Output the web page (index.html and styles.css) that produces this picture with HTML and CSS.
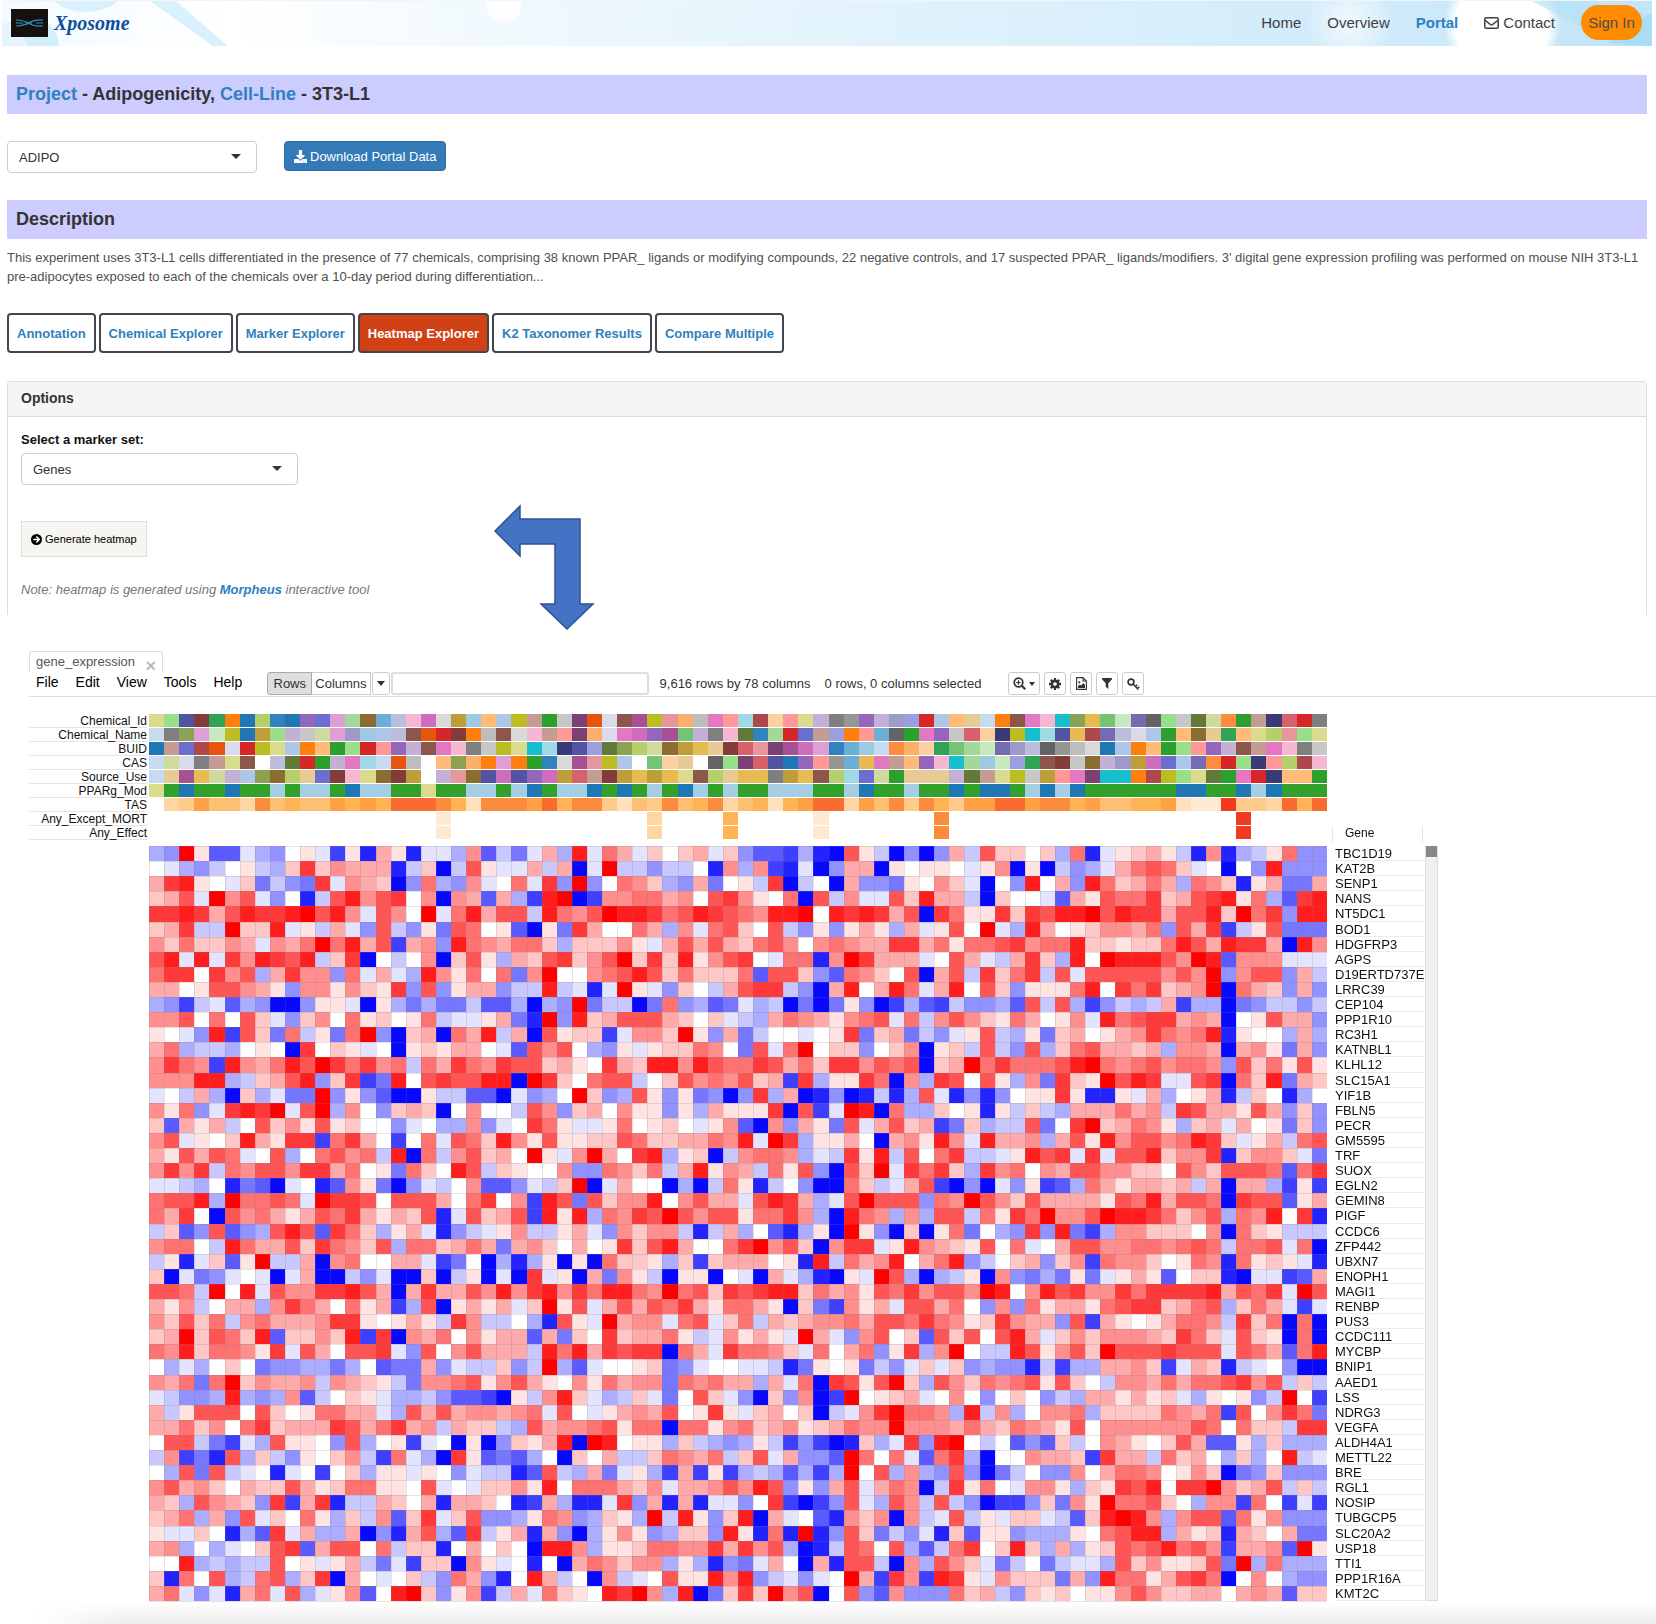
FILE: index.html
```html
<!DOCTYPE html>
<html lang="en">
<head>
<meta charset="utf-8">
<title>Xposome - Portal</title>
<link rel="stylesheet" href="styles.css">
</head>
<body>
<header class="site-header">
  <svg class="header-art" viewBox="0 0 1650 45" preserveAspectRatio="none" aria-hidden="true">
    <defs>
      <linearGradient id="sky" x1="0" x2="1" y1="0" y2="0">
        <stop offset="0" stop-color="#f4fbff"/><stop offset=".14" stop-color="#ffffff"/><stop offset=".3" stop-color="#f0f9fe"/>
        <stop offset=".55" stop-color="#e0f2fc"/><stop offset=".75" stop-color="#d5edfb"/><stop offset="1" stop-color="#c3e5f8"/>
      </linearGradient>
      <radialGradient id="glow"><stop offset=".8" stop-color="#fff"/><stop offset="1" stop-color="#fff" stop-opacity="0"/></radialGradient>
      <radialGradient id="soft"><stop offset=".2" stop-color="#fff" stop-opacity=".6"/><stop offset="1" stop-color="#fff" stop-opacity="0"/></radialGradient>
    </defs>
    <rect width="1650" height="45" fill="url(#sky)"/>
    <ellipse cx="84" cy="-14" rx="38" ry="25" fill="#d9f0fd"/>
    <path d="M148 0H174L226 45H211Z" fill="#d9f0fd"/>
    <circle cx="26" cy="46" r="31" fill="#d3eefc"/>
    <path d="M0 20Q20 28 26 45H0Z" fill="#e6f6fe"/>
    <circle cx="502" cy="4" r="20" fill="url(#glow)" opacity=".8"/>
    <circle cx="1348" cy="22" r="46" fill="url(#soft)"/>
    <circle cx="1500" cy="25" r="58" fill="url(#glow)"/>
    <path d="M1530 0H1585L1650 14V45H1615Z" fill="#b5e0f7" opacity=".65"/>
    <path d="M1605 42L1650 12V45Z" fill="#9fd8f5" opacity=".6"/>
  </svg>
  <a class="brand" href="#">
    <svg class="brand-mark" width="37" height="28" viewBox="0 0 37 28" aria-hidden="true">
      <rect width="37" height="28" fill="#15110f"/>
      <path d="M5 11Q12 11 18 14.500T32 17M5 17Q12 17 18 13.500T32 11M5 14H12M16 12.500V16M20 12.500V16M25 14H32" fill="none" stroke="#2b94c4" stroke-width="1.200"/>
    </svg>
    <span class="brand-name">Xposome</span>
  </a>
  <nav class="site-nav">
    <a href="#">Home</a>
    <a href="#">Overview</a>
    <a class="current" href="#">Portal</a>
    <a class="with-icon" href="#"><svg width="15" height="12" viewBox="0 0 15 12" aria-hidden="true"><rect x=".8" y=".8" width="13.400" height="10.400" rx="1.300" fill="none" stroke="currentColor" stroke-width="1.500"/><path d="M1 3.300L6.500 7.600Q7.500 8.300 8.500 7.600L14 3.300" fill="none" stroke="currentColor" stroke-width="1.400"/></svg>Contact</a>
    <button class="sign-in" type="button">Sign In</button>
  </nav>
</header>

<main>
  <div class="page">
    <h1 class="bar"><a href="#">Project</a> - Adipogenicity, <a href="#">Cell-Line</a> - 3T3-L1</h1>
    <div class="portal-row">
      <div class="picker picker-portal"><select aria-label="Portal"><option>ADIPO</option></select></div>
      <button class="download" type="button"><svg width="13" height="13" viewBox="0 0 512 512" aria-hidden="true"><path fill="currentColor" d="M216 0h80c13.300 0 24 10.700 24 24v168h87.700c17.800 0 26.700 21.500 14.100 34.100L269.700 378.300c-7.500 7.500-19.800 7.500-27.300 0L90.100 226.100c-12.600-12.600-3.700-34.100 14.100-34.100H192V24c0-13.300 10.700-24 24-24zm296 376v112c0 13.300-10.700 24-24 24H24c-13.300 0-24-10.700-24-24V376c0-13.300 10.700-24 24-24h146.700l49 49c20.100 20.100 52.500 20.100 72.600 0l49-49H488c13.300 0 24 10.700 24 24zm-124 88c0-11-9-20-20-20s-20 9-20 20 9 20 20 20 20-9 20-20zm64 0c0-11-9-20-20-20s-20 9-20 20 9 20 20 20 20-9 20-20z"/></svg>Download Portal Data</button>
    </div>
    <h2 class="bar">Description</h2>
    <p class="description">This experiment uses 3T3-L1 cells differentiated in the presence of 77 chemicals, comprising 38 known PPAR_ ligands or modifying compounds, 22 negative controls, and 17 suspected PPAR_ ligands/modifiers. 3' digital gene expression profiling was performed on mouse NIH 3T3-L1 pre-adipocytes exposed to each of the chemicals over a 10-day period during differentiation...</p>
    <nav class="tabs">
      <a href="#">Annotation</a>
      <a href="#">Chemical Explorer</a>
      <a href="#">Marker Explorer</a>
      <a class="active" href="#">Heatmap Explorer</a>
      <a href="#">K2 Taxonomer Results</a>
      <a href="#">Compare Multiple</a>
    </nav>
    <section class="panel">
      <h3 class="panel-title">Options</h3>
      <div class="panel-body">
        <label for="marker">Select a marker set:</label>
        <div class="picker picker-marker"><select id="marker"><option>Genes</option></select></div>
        <button class="generate" type="button"><svg width="11" height="11" viewBox="0 0 12 12" aria-hidden="true"><circle cx="6" cy="6" r="6"/><path d="M2.500 6H8.500M5.800 2.800L9 6L5.800 9.200" fill="none" stroke="#fff" stroke-width="1.700"/></svg>Generate heatmap</button>
        <p class="note">Note: heatmap is generated using <a href="#">Morpheus</a> interactive tool</p>
      </div>
      <svg class="arrow" width="102" height="128" viewBox="0 0 102 128" aria-hidden="true"><path d="M2 27L27 2V15H87V100H100L74 125L48 100H62V40H27V52Z" fill="#4472c4" stroke="#2f528f" stroke-width="1.500"/></svg>
    </section>
  </div>

  <section class="morpheus">
    <div class="file-tab"><span>gene_expression</span><button type="button" aria-label="Close">×</button></div>
    <div class="toolbar">
      <div class="menu"><button type="button">File</button><button type="button">Edit</button><button type="button">View</button><button type="button">Tools</button><button type="button">Help</button></div>
      <div class="search">
        <button class="seg pressed" type="button">Rows</button><button class="seg" type="button">Columns</button><button class="seg seg-caret" type="button" aria-label="More"><i class="caret"></i></button><input type="text" aria-label="Search">
      </div>
      <div class="status"><span>9,616 rows by 78 columns</span><span>0 rows, 0 columns selected</span></div>
      <div class="tools">
        <button class="tool wide" type="button" aria-label="Zoom"><svg width="13" height="13" viewBox="0 0 13 13"><circle cx="5.500" cy="5.500" r="4.300" fill="none" stroke="currentColor" stroke-width="1.700"/><path d="M5.500 3.300V7.700M3.300 5.500H7.700" stroke="currentColor" stroke-width="1.200"/><path d="M8.800 8.800L12.200 12.200" stroke="currentColor" stroke-width="2.200"/></svg><i class="caret small"></i></button>
        <button class="tool" type="button" aria-label="Settings"><svg width="12" height="12" viewBox="-6 -6 12 12"><circle r="3.100" fill="none" stroke="currentColor" stroke-width="2.500"/><path d="M0 -6V-3M0 6V3M-6 0H-3M6 0H3M-4.200 -4.200L-2.500 -2.500M4.200 4.200L2.500 2.500M4.200 -4.200L2.500 -2.500M-4.200 4.200L-2.500 2.500" stroke="currentColor" stroke-width="2.400"/></svg></button>
        <button class="tool" type="button" aria-label="Save image"><svg width="11" height="13" viewBox="0 0 11 13"><path d="M.6 .6H7L10.400 4V12.400H.6ZM7 .6V4H10.400" fill="none" stroke="currentColor" stroke-width="1.100"/><path d="M2 11V9L4 7.500L5 8.500L7.500 6L9 8V11Z" fill="currentColor"/><circle cx="3.300" cy="5.300" r="1.100" fill="currentColor"/></svg></button>
        <button class="tool" type="button" aria-label="Filter"><svg width="10" height="11" viewBox="0 0 10 11"><path d="M0 0H10V1.200L6.300 5.200V11L3.700 8.800V5.200L0 1.200Z" fill="currentColor"/></svg></button>
        <button class="tool" type="button" aria-label="Color key"><svg width="13" height="12" viewBox="0 0 13 12"><circle cx="4" cy="4" r="2.900" fill="none" stroke="currentColor" stroke-width="1.700"/><path d="M6 6L11.500 11.500M8.500 8.500L10.300 6.700M10.500 10.500L12.300 8.700" stroke="currentColor" stroke-width="1.600" fill="none"/></svg></button>
      </div>
    </div>
    <div class="viewer">
      <ul class="track-names">
        <li>Chemical_Id</li><li>Chemical_Name</li><li>BUID</li><li>CAS</li><li>Source_Use</li><li>PPARg_Mod</li><li>TAS</li><li>Any_Except_MORT</li><li>Any_Effect</li>
      </ul>
      <canvas id="tracks" width="1178" height="126"></canvas>
      <div class="gene-head">Gene</div>
      <canvas id="heatmap" width="1178" height="756"></canvas>
      <ul class="genes" id="genes"></ul>
      <div class="scroll"><div class="thumb"></div></div>
    </div>
  </section>
</main>
<footer class="shade"></footer>
<script src="heatmap.js"></script>
</body>
</html>
```
FILE: styles.css
```css
* { box-sizing: border-box; }
body { margin: 0; background: #fff; color: #333; font: 13px/19px "Liberation Sans", Arial, sans-serif; }
a { color: #2f80bf; text-decoration: none; }
button, input, select { font: inherit; color: inherit; margin: 0; }
h1, h2, h3, p, ul { margin: 0; padding: 0; }
ul { list-style: none; }
svg { display: block; flex: none; }

.site-header { position: relative; display: flex; justify-content: space-between; align-items: center; height: 46px; margin: 0 4px 0 2px; padding: 0 10px 2px 9px; border-top: 1px solid #f4f4f4; }
.header-art { position: absolute; inset: 0; width: 100%; height: 100%; }
.brand { position: relative; display: flex; align-items: center; gap: 6px; }
.brand-name { color: #0d4f9f; font: italic bold 20px/28px "Liberation Serif", "Times New Roman", serif; }
.site-nav { position: relative; display: flex; align-items: center; gap: 26px; font-size: 15px; }
.site-nav a { color: #3d3f47; }
.site-nav .current { color: #2f80bf; font-weight: bold; }
.site-nav .with-icon { display: flex; align-items: center; gap: 4px; }
.sign-in { width: 61px; height: 35px; padding: 0; border: 0; border-radius: 18px; background: #ff8c00; color: #4b4b50; }

.page { padding: 0 9px 0 7px; }
.bar { height: 39px; margin-top: 29px; padding-left: 9px; background: #ccccff; font-size: 18px; line-height: 38px; font-weight: bold; }
.portal-row { display: flex; align-items: flex-start; gap: 27px; margin-top: 27px; }
.portal-row + .bar { margin-top: 27px; }
.picker { position: relative; }
.picker::after { content: ""; position: absolute; right: 16px; top: 13px; border: 5px solid transparent; border-top-color: #333; border-bottom: 0; pointer-events: none; }
.picker select { width: 100%; height: 32px; padding: 0 11px; appearance: none; border: 1px solid #ccc; border-radius: 4px; background: #fff; }
.picker-portal { width: 250px; }
.picker-marker { width: 277px; }
.download { display: flex; align-items: center; gap: 3px; height: 30px; padding: 0 9px; border: 1px solid #2e6da4; border-radius: 4px; background: #337ab7; color: #fff; }
.description { margin-top: 9px; color: #505050; }
.tabs { display: flex; gap: 3px; margin-top: 27px; }
.tabs a { height: 40px; padding: 0 8px; border: 2px solid #44454f; border-radius: 4px; line-height: 37px; font-weight: bold; }
.tabs .active { background: #d04215; color: #fff; }

.panel { position: relative; margin-top: 28px; height: 234px; border: 1px solid #ddd; border-bottom: 0; border-radius: 4px 4px 0 0; }
.panel-title { height: 35px; padding-left: 13px; border-bottom: 1px solid #ddd; background: #f5f5f5; font-size: 14px; line-height: 32px; }
.panel-body { display: flex; flex-direction: column; align-items: flex-start; padding: 13px; }
.panel-body label { margin-bottom: 4px; color: #111; font-weight: bold; }
.generate { display: flex; align-items: center; gap: 3px; height: 36px; margin-top: 36px; padding: 0 9px; border: 1px solid #ddd; background: #f6f5ef; color: #000; font-size: 11px; }
.note { margin-top: 23px; color: #777; font-style: italic; }
.note a { font-weight: bold; }
.arrow { position: absolute; left: 485px; top: 122px; }

.morpheus { margin: 36px 0 0 29px; }
.file-tab { display: flex; justify-content: space-between; width: 134px; height: 21px; padding: 0 6px; border: 1px solid #ddd; border-bottom: 0; border-radius: 4px 4px 0 0; color: #555; }
.file-tab button { padding: 5px 0 0; border: 0; background: none; color: #bbb; font-size: 18px; line-height: 18px; font-weight: bold; }
.toolbar { display: flex; align-items: flex-start; height: 25px; padding-left: 7px; border-bottom: 1px solid #ddd; }
.menu { display: flex; gap: 17px; margin-right: 25px; color: #000; font-size: 14px; line-height: 21px; }
.menu button { padding: 0; border: 0; background: none; }
.search { display: flex; height: 23px; }
.seg { height: 23px; padding: 0 3px; border: 1px solid #ccc; background: #fff; }
.seg + .seg { border-left: 0; }
.pressed { width: 45px; border-radius: 3px 0 0 3px; border-color: #aaa; background: #dedede; }
.search .seg-caret { width: 18px; margin-left: 1px; padding: 0 4px; border-left: 1px solid #ccc; border-radius: 3px; }
.search input { width: 258px; margin-left: 1px; border: 2px solid #ddd; border-radius: 3px; background: #fff; }
.caret { display: block; width: 0; border: 4px solid transparent; border-top: 5px solid #333; border-bottom: 0; }
.caret.small { border-width: 4px 3px 0; }
.status { display: flex; gap: 14px; margin-left: 11px; line-height: 23px; }
.tools { display: flex; gap: 4px; margin-left: 27px; }
.tool { display: flex; align-items: center; justify-content: center; gap: 3px; width: 22px; height: 23px; padding: 0; border: 1px solid #ccc; border-radius: 3px; background: #fff; }
.tool.wide { width: 32px; }

.viewer { display: grid; grid-template-columns: 120px 1178px 98px 13px; margin-top: 17px; }
.viewer canvas { display: block; }
.track-names { grid-column: 1; padding-right: 2px; color: #111; font-size: 12px; text-align: right; }
.track-names li { height: 14px; border-bottom: 1px solid #e4e4e4; line-height: 14px; }
.gene-head { align-self: end; width: 91px; height: 16px; margin: 0 0 -2px 5px; padding-left: 12px; border: 1px solid #e8e8e8; border-width: 0 1px; color: #111; font-size: 12px; line-height: 15px; }
#heatmap { grid-column: 2; margin-top: 6px; }
.genes { display: grid; grid-template-rows: repeat(50, 1fr); height: 755px; margin: 6px 3px 0 8px; color: #111; font-size: 13px; line-height: 15px; }
.genes li { min-height: 0; border-bottom: 1px solid #ececec; white-space: nowrap; }
.scroll { height: 755px; margin-top: 6px; border: 1px solid #ddd; border-top: 0; background: #f0f0f0; }
.thumb { height: 11px; background: #888; }
.shade { height: 22px; margin-left: 30px; background: linear-gradient(to right, #fff, transparent 100px), linear-gradient(#fff, #ececec); }
```
FILE: heatmap.js
```javascript
// Column count and cell size shared by both canvases.
var COLS = 78;
var CELL = 15.1;

// One character per cell: 0 is white, 1-9 rising red, a-i rising blue.
var rows = [
  ['TBC1D19', 'cd91ffacd01ag1h31haac4fbea', '3c8a53a2023a2dffgchi61bidi', 'd3b62202c5ha1231bh4hcb15dd'],
  ['KAT2B', '0acdb01bc2724333hb2ib61aa3', 'b3ia9bbdbb0h4c4ghaid33i101', '10a14i1ibdca35652a0i0d8ddd'],
  ['SENP1', '37810a2ebde7a432id5cd4a05a', '7d9d0542cd3e01b7ib0i3dde10', '42ai0d803d852353c542h13ee3'],
  ['NANS', '236a946ad0hb6846704i43f3cg', '89ig4455340674105i6b4aa628', '33bi200af3165572367815cf78'],
  ['NT5DC1', '77873687789684a6409a58366b', '8546988756876548890878736i', '7511727688968773668295' + '7d88'],
  ['BOD1', '237bb9228a1b3ad6bd1e6501fi', '1e730053c4a56206bd1d131c3a', '1609ac830124435d637gb16eee'],
  ['HDGFRP3', '42522' + '43a4359583' + '6g34d854355', '2c22241a363632564045433773', '51556745582212258638773i84'],
  ['AGPS', '68a8a748768b27i0b04i261c32', '672469272814670a55h497333a', '063ab372c80988864' + '98f444aaa'],
  ['D19ERTD737E', '577074' + '6c3744d5a3ac841505e4', '9004568625222' + '5f662df54206i', '36b7257b6a66666' + '4649d466d3b'],
  ['LRRC39', '330166431d4414217d6d133dbb', '8baha91ad20b3677bdi380385a', '38062d111580757234' + '9i532d3d'],
  ['CEP104', 'cdgbafcdiid11ai1ceceebffci', 'cd9ebbie5dcfeacbieie1digcf', 'gbddcf6b6cgdbcb3gcciedbbdb'],
  ['PPP1R10', '446050' + '62ad2405120' + '15baa13eh', '9d8236663202abc35431456a5b', '464215301' + '4a8567734' + '3i01633d'],
  ['RC3H1', '10ad8g62e5b1e59di23i538b3i', '6122ga44291d3eb00a017e23eb', 'da16bc1e23013475458h100c3c'],
  ['KATNBL1', '35cbbc010i7021a0i121330af6', '460cd1a122540e6a59022d024i', '12b6bd6c2563323c443i341e3d'],
  ['KLHL12', '4754g843586975745b53754766', '2310732884865576352774656i', '239575556895456455' + '4d625161'],
  ['SLC15A1', '44488cb2368d27ge80676688i9', '720566b02645' + '4623g7c1175i4c', '76061c4e7219687aa67i528e32'],
  ['YIF1B', 'a0b3ci2caee9d1dfii1bbffiad', 'c092dc61d1edid7c3ihdihbhc6', 'ahdhd01171hh1a3c013hb20hc0'],
  ['FBLN5', '415da7879a69c40d232i0400b6', '4d230411d1c31117i6ga98i5cc', '201h1b2bc333534b76331' + '63d2d'],
  ['PECR', '2f313b0624161200da0cc4da07', '51aa150120a14fi4d31e6a3623', 'ge2cbb6e0792354' + '1c23a301e2d'],
  ['GM5595', '46a10283177g5730g05a652841', '61122652233548a97c1130i341', '84a8334c3618466458' + '72a13b56'],
  ['TRF', '316365a06c05645b8i5b462309', '1a493078c12ib4554cab718b60', '57bba1867a7a66824' + '47h2442ae'],
  ['SUOX', '4747b5466477350' + '1e52086b210', '04dd5425b38143b516di629a75', '72c74504366442206426665f57'],
  ['EGLN2', 'aabc0hefia0hf41eidab04ffda', 'b29ia300icib51hb0dii52ba36', 'gidiad1gfc5313323b3i33cg1g'],
  ['GEMIN8', '5668c95565a97760666305704g', '86e624480463' + '3a6873ca69666d', '5496426333316583665i766f13'],
  ['PIGF', '5370i64531365731326ha6236g', '818c54769646615574ci854c4c', '66b5175944698875246c54807h'],
  ['CCDC6', 'b2fd6fdc686f752c13ahdba14bb', '13ad4244bhb3c0fhc1i91di2i15', 'e0cd7d8egc4422204i521bbb'],
  ['ZFP442', '4550b85336275426c5523' + '53e342', '03017268300579462i477a18432', '1605a036644554565b556a5i'],
  ['UBXN7', 'b1ha2f19bb3i450033age0ichc1', 'i1i5221c2g233301h8b53480358', 'db023d24g54420154h5121ah'],
  ['ENOPH1', '2iaeda0aia3iibdaii2ib1iai7a', '1i3e41bi11i0ai3achi1a96cicb', '1i4dece1ea131f022hiaagf3'],
  ['MAGI1', '665b908a64477863i3733648478', '475885495627678825341657466', '498048674475777783657a96'],
  ['RENBP', '314b033c475305' + '13gc6i1313a29', '16a363657315531i2eg413a6635', '0d4d513315677235' + '6c253aga'],
  ['PUS3', '42625b4533347710131b74bb0ch', '61a9344a56a25b3234453665754', '127433d6g31013554b725i5i'],
  ['CCDC111', '23926528f22428g7i43504133f3', 'e20723351ba4131a93ad4602f62', '60683a24244432' + '752a621i5i'],
  ['MYCBP', '548255417a630667ad6046333b8', '583767' + '7i53a75542a5035d17c49', '0bb86146296667666a653f58'],
  ['BNIP1', '0cac020eddccec0fee3dabb2db9', 'cfa0012eda00aabhe101ebda2a2', 'dcddhbgcc3342ga32hba0dii'],
  ['AAED1', '435e5924334b4321be445614631', '0415344e54533c3a5i761692c64', '254561620b44353556746b2b'],
  ['LSS', 'abddc8cdc4fb021accbdffgi1b4', '82acb2ae062adi2d4ig90123a04', '0d020dbc331312ac101db90g'],
  ['NDRG3', '3b16660620155' + '33ac63634434' + '5a', '60a134360171a2302iba479554c', '8b4c0445c22225435g60475e'],
  ['VEGFA', '335240572333763' + '5734b322bc63', '4456155i5514523412354494443', '532543160444444650522b77'],
  ['ALDH4A1', '066bega' + 'c6110d6c01ga0i1id213', '8i98011c2bcdc1bgdgih2ca7d89', '0b0fdf2b04310263ff1c2ccc'],
  ['METTL22', 'b4geh6c2bd1024bg5aci71fefc0', 'i203bb25435b26a3ddf9505af57', 'ci004332g733b5230c2c08ba'],
  ['BRE', '0c6e6ba0ha0g02c11a10dabbhf6', 'bc3ea1cg3g1gcbcfcgc906c4cd6', 'dieb0dd4035540142ied2ddd'],
  ['RGL1', '463420322631255110' + '6a0a22418', '0555324a3346486d1d36a354ib7', '150a441c2176807794236b2b'],
  ['NOSIP', '32c6432d7g37hbb3203h3320hg3', 'chha7d3h3haad07gigd6ac64b6b', 'diggd2e41955620c44g50gag'],
  ['TUBGCP5', '235c3d6a2051c2b4f27a26ddc15', '4dc21c9b81d28i3a0fh424i4ba6', 'b1a22abf28984c466f514ddd'],
  ['SLC20A2', '1aa20hcf7a3cc3idh36cf7b13h3', 'dic141dc22d81h5h9hd62ebdah2', 'f11dccc105688c312h3203ee'],
  ['USP18', '34c0ca0267f36605b22h03020i8', '84c112554473746cihb6506cfb5', '70282c3c1265685' + '64g334f91'],
  ['TTI1', '008cbcbb601a13beag22i41a0h0', 'i354244c1chdea30i3h66bi4c64', '2aeb0ebaac6241126e9c5ccc'],
  ['PPP1R16A', '2h506cb56c27i30a02bd53dh083', 'b0i4ba0611848dbada093g74g87', '1a4222e3d855136' + '75i040cdd'],
  ['KMT2C', '35adah35a6ca14f0892d14gb3a5', '2108794c8ie272946i06df4ddd5', '23bd21201146422330343f22']
];

// Categorical palettes for the annotation tracks.
var codes = 'ABCDEFGHIJKLMNOPQRSTabcdefghijklmnopqrst0123456789uvwxyzUVWX';
var hex = ('1f77b4aec7e8ff7f0effbb782ca02c98df8ad62728ff98969467bdc5b0d58c564bc49c94e377c2f7b6d27f7f7fc7c7c7bcbd22dbdb8d17becf9edae5' +
  '393b795254a36b6ecf9c9ede6379398ca252b5cf6bcedb9c8c6d31bd9e39e7ba52e7cb94843c39ad494ad6616be7969c7b4173a55194ce6dbdde9ed6' +
  '3182bd6baed69ecae1c6dbefe6550dfd8d3cfdae6bfdd0a231a35474c476a1d99bc7e9c0756bb19e9ac8bcbddcdadaeb636363969696bdbdbdd9d9d9');
var orange = { 0: '#fff', 1: '#feead3', 2: '#fee0bd', 3: '#fed6a3', 4: '#fecb88', 5: '#fdc072', 6: '#feb455', 7: '#fea045', 8: '#fc8c3d', 9: '#f86c32', r: '#f03b20' };
var effect = '...................1.............3....6.....1.......8...................r.....';

var tracks = [
  'RFbm8CAg0AIctui1yNsXj2DBQLEPq4zKr' + 'Qp6WMHTn7HRJOVIJxdGBDl3CKMNSfk9vwUFP' + 'eh5ELaoGO',
  '3OftvQAjFJPhtx2ByK4GmCWKXNLHq6zMs' + 'Ir9JONe0uGcLdCH1UEMIPo7aQSTbknwyzBED' + 'il8DRgpFR',
  'ALcn4zGQRBCDEFGHIJKMNOPQRSTabdefg' + 'hijklmopqrst012356789uvwxyUVWXABCDEF' + 'HIJKLMNOP',
  '3hzOLRK.yeGEJMT34W.Df6CtCE0XrpQB.' + '97l.UFqobAIHV1kMLDINSu2vd8KmPiJxjscB' + 'w5GFaHgnN',
  '3lrkhJBfiglcmNRimj.JpibsbIsjoLmjk' + 'jkRKglkkOjkKgTchElllJeLRQPjHMqSSCnQF' + 'ReEMGaDDE',
  'REAEEAEE2E22EA22EEREE22E2AE22AEAE' + '2EA2E2EE222EE2AEE2EEAEAAE2A2AEEEEEEA' + 'AEEA2AEEE',
  '034755385655767699986288879688425' + '485683562679937584864779978867556672' + '11r443969',
  effect, effect
];

function cellColor(code) {
  var n = '0123456789'.indexOf(code);
  if (n >= 0) {
    var v = Math.round(255 - n * 28.3);
    return 'rgb(255,' + v + ',' + v + ')';
  }
  n = 'abcdefghi'.indexOf(code) + 1;
  var w = Math.max(0, Math.round(255 - n * 27.5));
  return 'rgb(' + w + ',' + w + ',255)';
}

function trackColor(code, row) {
  if (code === '.') return '#fff';
  if (row > 5) return orange[code];
  if (row === 5 && code === 'E') return '#33a02c';
  if (row === 5 && code === '2') return '#a6cee3';
  var i = codes.indexOf(code);
  return '#' + hex.substr(i * 6, 6);
}

function edge(i) { return Math.round(i * CELL); }

var tctx = document.getElementById('tracks').getContext('2d');
tracks.forEach(function (track, r) {
  for (var c = 0; c < COLS; c++) {
    tctx.fillStyle = trackColor(track[c], r);
    tctx.fillRect(edge(c), r * 14, edge(c + 1) - edge(c), 13);
  }
});

var hctx = document.getElementById('heatmap').getContext('2d');
var list = document.getElementById('genes');
rows.forEach(function (row, r) {
  var cells = row[1] + row[2] + row[3];
  for (var c = 0; c < COLS; c++) {
    hctx.fillStyle = cellColor(cells[c]);
    hctx.fillRect(edge(c), edge(r), edge(c + 1) - edge(c), edge(r + 1) - edge(r));
  }
  var li = document.createElement('li');
  li.textContent = row[0];
  list.appendChild(li);
});
hctx.fillStyle = 'rgba(128,128,128,.22)';
for (var i = 0; i <= COLS; i++) hctx.fillRect(edge(i), 0, 1, 755);
for (var j = 0; j <= rows.length; j++) hctx.fillRect(0, edge(j), 1178, 1);
```
